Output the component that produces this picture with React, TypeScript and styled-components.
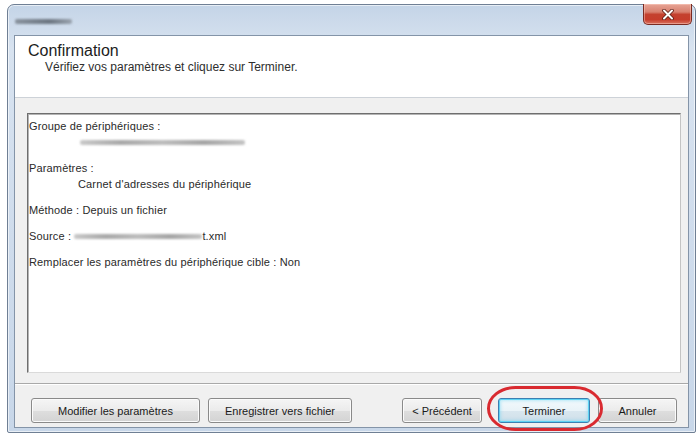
import React from "react";
import styled, { createGlobalStyle } from "styled-components";

const Global = createGlobalStyle`
  html, body { margin: 0; padding: 0; background: #ffffff; }
  body {
    width: 698px;
    height: 437px;
    overflow: hidden;
    font-family: "Liberation Sans", Arial, sans-serif;
  }
`;

const Page = styled.div`
  width: 698px;
  height: 437px;
  box-sizing: border-box;
  padding: 4px 2px 4px 7px;
  display: flex;
`;

const Window = styled.div`
  flex: 1;
  display: flex;
  flex-direction: column;
  border: 1px solid #6f7f94;
  border-radius: 7px 7px 2px 2px;
  background: linear-gradient(
    180deg,
    #c4d4e7 0%,
    #d8e3f0 10%,
    #cfdcec 55%,
    #c8d7e9 100%
  );
  box-shadow: inset 0 0 0 1px rgba(255, 255, 255, 0.6);
  padding: 0 6px 4px 6px;
`;

const TitleBar = styled.div`
  height: 30px;
  display: flex;
  align-items: flex-start;
  justify-content: space-between;
`;

const BlurredTitle = styled.div`
  margin: 14px 0 0 1px;
  width: 57px;
  height: 5px;
  border-radius: 2px;
  background: linear-gradient(90deg, #8a949f, #6d7782 60%, #9aa4af);
  filter: blur(1.3px);
`;

const CloseButton = styled.div`
  margin: -1px -3px 0 0;
  width: 49px;
  height: 21px;
  box-sizing: border-box;
  border: 1px solid #7a2b22;
  border-top: none;
  border-radius: 0 0 5px 5px;
  background: linear-gradient(
    180deg,
    #e7a596 0%,
    #d8806f 40%,
    #c4412f 52%,
    #c63d2c 78%,
    #d9725f 100%
  );
  box-shadow: inset 0 0 0 1px rgba(255, 210, 200, 0.45);
  display: flex;
  align-items: center;
  justify-content: center;
`;

const Client = styled.div`
  flex: 1;
  display: flex;
  flex-direction: column;
  border: 1px solid #8494a8;
  background: #f0f0f0;
`;

const Header = styled.div`
  box-sizing: border-box;
  height: 62px;
  background: #ffffff;
  border-bottom: 1px solid #cdd2d8;
  padding: 6px 13px 0 13px;
`;

const HeaderTitle = styled.div`
  font-size: 16px;
  line-height: 18px;
  color: #1c1c1c;
`;

const HeaderSubtitle = styled.div`
  margin-left: 17px;
  font-size: 12px;
  line-height: 14px;
  color: #2e2e2e;
`;

const Body = styled.div`
  flex: 1;
  display: flex;
  padding: 15px 7px 10px 12px;
`;

const TextBox = styled.div`
  flex: 1;
  background: #ffffff;
  border: 1px solid;
  border-color: #6e6e6e #c4c4c4 #dadada #6e6e6e;
  box-shadow: inset 1px 1px 0 #b4b4b4;
  padding: 4px 4px 0 1px;
  font-size: 11px;
  line-height: 16px;
  letter-spacing: 0.15px;
  color: #2a2a2a;
`;

const Block = styled.div`
  margin-bottom: 10px;
`;

const Line = styled.div<{ $indent?: number }>`
  min-height: 16px;
  padding-left: ${(p) => p.$indent ?? 0}px;
  display: flex;
  align-items: center;
  white-space: nowrap;
`;

const Redacted = styled.span<{ $w: number }>`
  display: inline-block;
  width: ${(p) => p.$w}px;
  height: 5px;
  border-radius: 2px;
  background: linear-gradient(
    90deg,
    #c9c9c9 0%,
    #a9a9a9 25%,
    #bdbdbd 50%,
    #a5a5a5 75%,
    #c4c4c4 100%
  );
  filter: blur(1.2px);
`;

const Separator = styled.div`
  border-top: 1px solid #a9a9a9;
  border-bottom: 1px solid #ffffff;
`;

const ButtonRow = styled.div`
  height: 42px;
  box-sizing: border-box;
  padding: 13px 11px 0 16px;
  display: flex;
  align-items: flex-start;
`;

const Group = styled.div<{ $gap: number }>`
  display: flex;
  gap: ${(p) => p.$gap}px;
`;

const Spacer = styled.div`
  flex: 1;
`;

const Button = styled.button<{ $w: number; $default?: boolean }>`
  width: ${(p) => p.$w}px;
  height: 25px;
  box-sizing: border-box;
  padding: 0;
  border: 1px solid ${(p) => (p.$default ? "#3c7fb1" : "#8a8a8a")};
  border-radius: 3px;
  background: ${(p) =>
    p.$default
      ? "linear-gradient(180deg, #f3f9fc 0%, #e9f3f8 50%, #d9e7ef 51%, #cfdfe9 100%)"
      : "linear-gradient(180deg, #f5f5f5 0%, #ebebeb 50%, #dedede 51%, #d3d3d3 100%)"};
  box-shadow: ${(p) =>
    p.$default
      ? "inset 0 0 0 1px #5fd3f3, inset 0 0 3px 2px rgba(110, 210, 240, 0.45)"
      : "inset 0 0 0 1px #fbfbfb"};
  font-family: "Liberation Sans", Arial, sans-serif;
  font-size: 11px;
  color: #1a1a1a;
`;

const Highlight = styled.span`
  position: relative;
  display: inline-flex;
`;

const Ring = styled.svg`
  position: absolute;
  left: -11px;
  top: -12px;
  width: 116px;
  height: 45px;
  overflow: visible;
  pointer-events: none;
`;

export default function App() {
  return (
    <>
      <Global />
      <Page>
        <Window>
          <TitleBar>
            <BlurredTitle />
            <CloseButton>
              <svg width="12" height="11" viewBox="0 0 12 11">
                <path
                  d="M2 1.5 L10 9.5 M10 1.5 L2 9.5"
                  stroke="#5a1a12"
                  strokeWidth="3.6"
                  strokeLinecap="round"
                />
                <path
                  d="M2 1.5 L10 9.5 M10 1.5 L2 9.5"
                  stroke="#ffffff"
                  strokeWidth="2"
                  strokeLinecap="round"
                />
              </svg>
            </CloseButton>
          </TitleBar>
          <Client>
            <Header>
              <HeaderTitle>Confirmation</HeaderTitle>
              <HeaderSubtitle>
                Vérifiez vos paramètres et cliquez sur Terminer.
              </HeaderSubtitle>
            </Header>
            <Body>
              <TextBox>
                <Block>
                  <Line>Groupe de périphériques :</Line>
                  <Line $indent={51}>
                    <Redacted $w={165} />
                  </Line>
                </Block>
                <Block>
                  <Line>Paramètres :</Line>
                  <Line $indent={49}>Carnet d'adresses du périphérique</Line>
                </Block>
                <Block>
                  <Line>Méthode : Depuis un fichier</Line>
                </Block>
                <Block>
                  <Line>
                    Source :&nbsp;
                    <Redacted $w={128} />
                    t.xml
                  </Line>
                </Block>
                <Block>
                  <Line>Remplacer les paramètres du périphérique cible : Non</Line>
                </Block>
              </TextBox>
            </Body>
            <Separator />
            <ButtonRow>
              <Group $gap={8}>
                <Button $w={169}>Modifier les paramètres</Button>
                <Button $w={144}>Enregistrer vers fichier</Button>
              </Group>
              <Spacer />
              <Group $gap={8}>
                <Button $w={80} style={{ marginRight: 8 }}>
                  &lt; Précédent
                </Button>
                <Highlight>
                  <Button $w={92} $default>
                    Terminer
                  </Button>
                  <Ring viewBox="0 0 116 45">
                    <rect
                      x="1.5"
                      y="1.5"
                      width="113"
                      height="42"
                      rx="27"
                      ry="21"
                      fill="none"
                      stroke="#d92a30"
                      strokeWidth="3"
                    />
                  </Ring>
                </Highlight>
                <Button $w={79}>Annuler</Button>
              </Group>
            </ButtonRow>
          </Client>
        </Window>
      </Page>
    </>
  );
}
